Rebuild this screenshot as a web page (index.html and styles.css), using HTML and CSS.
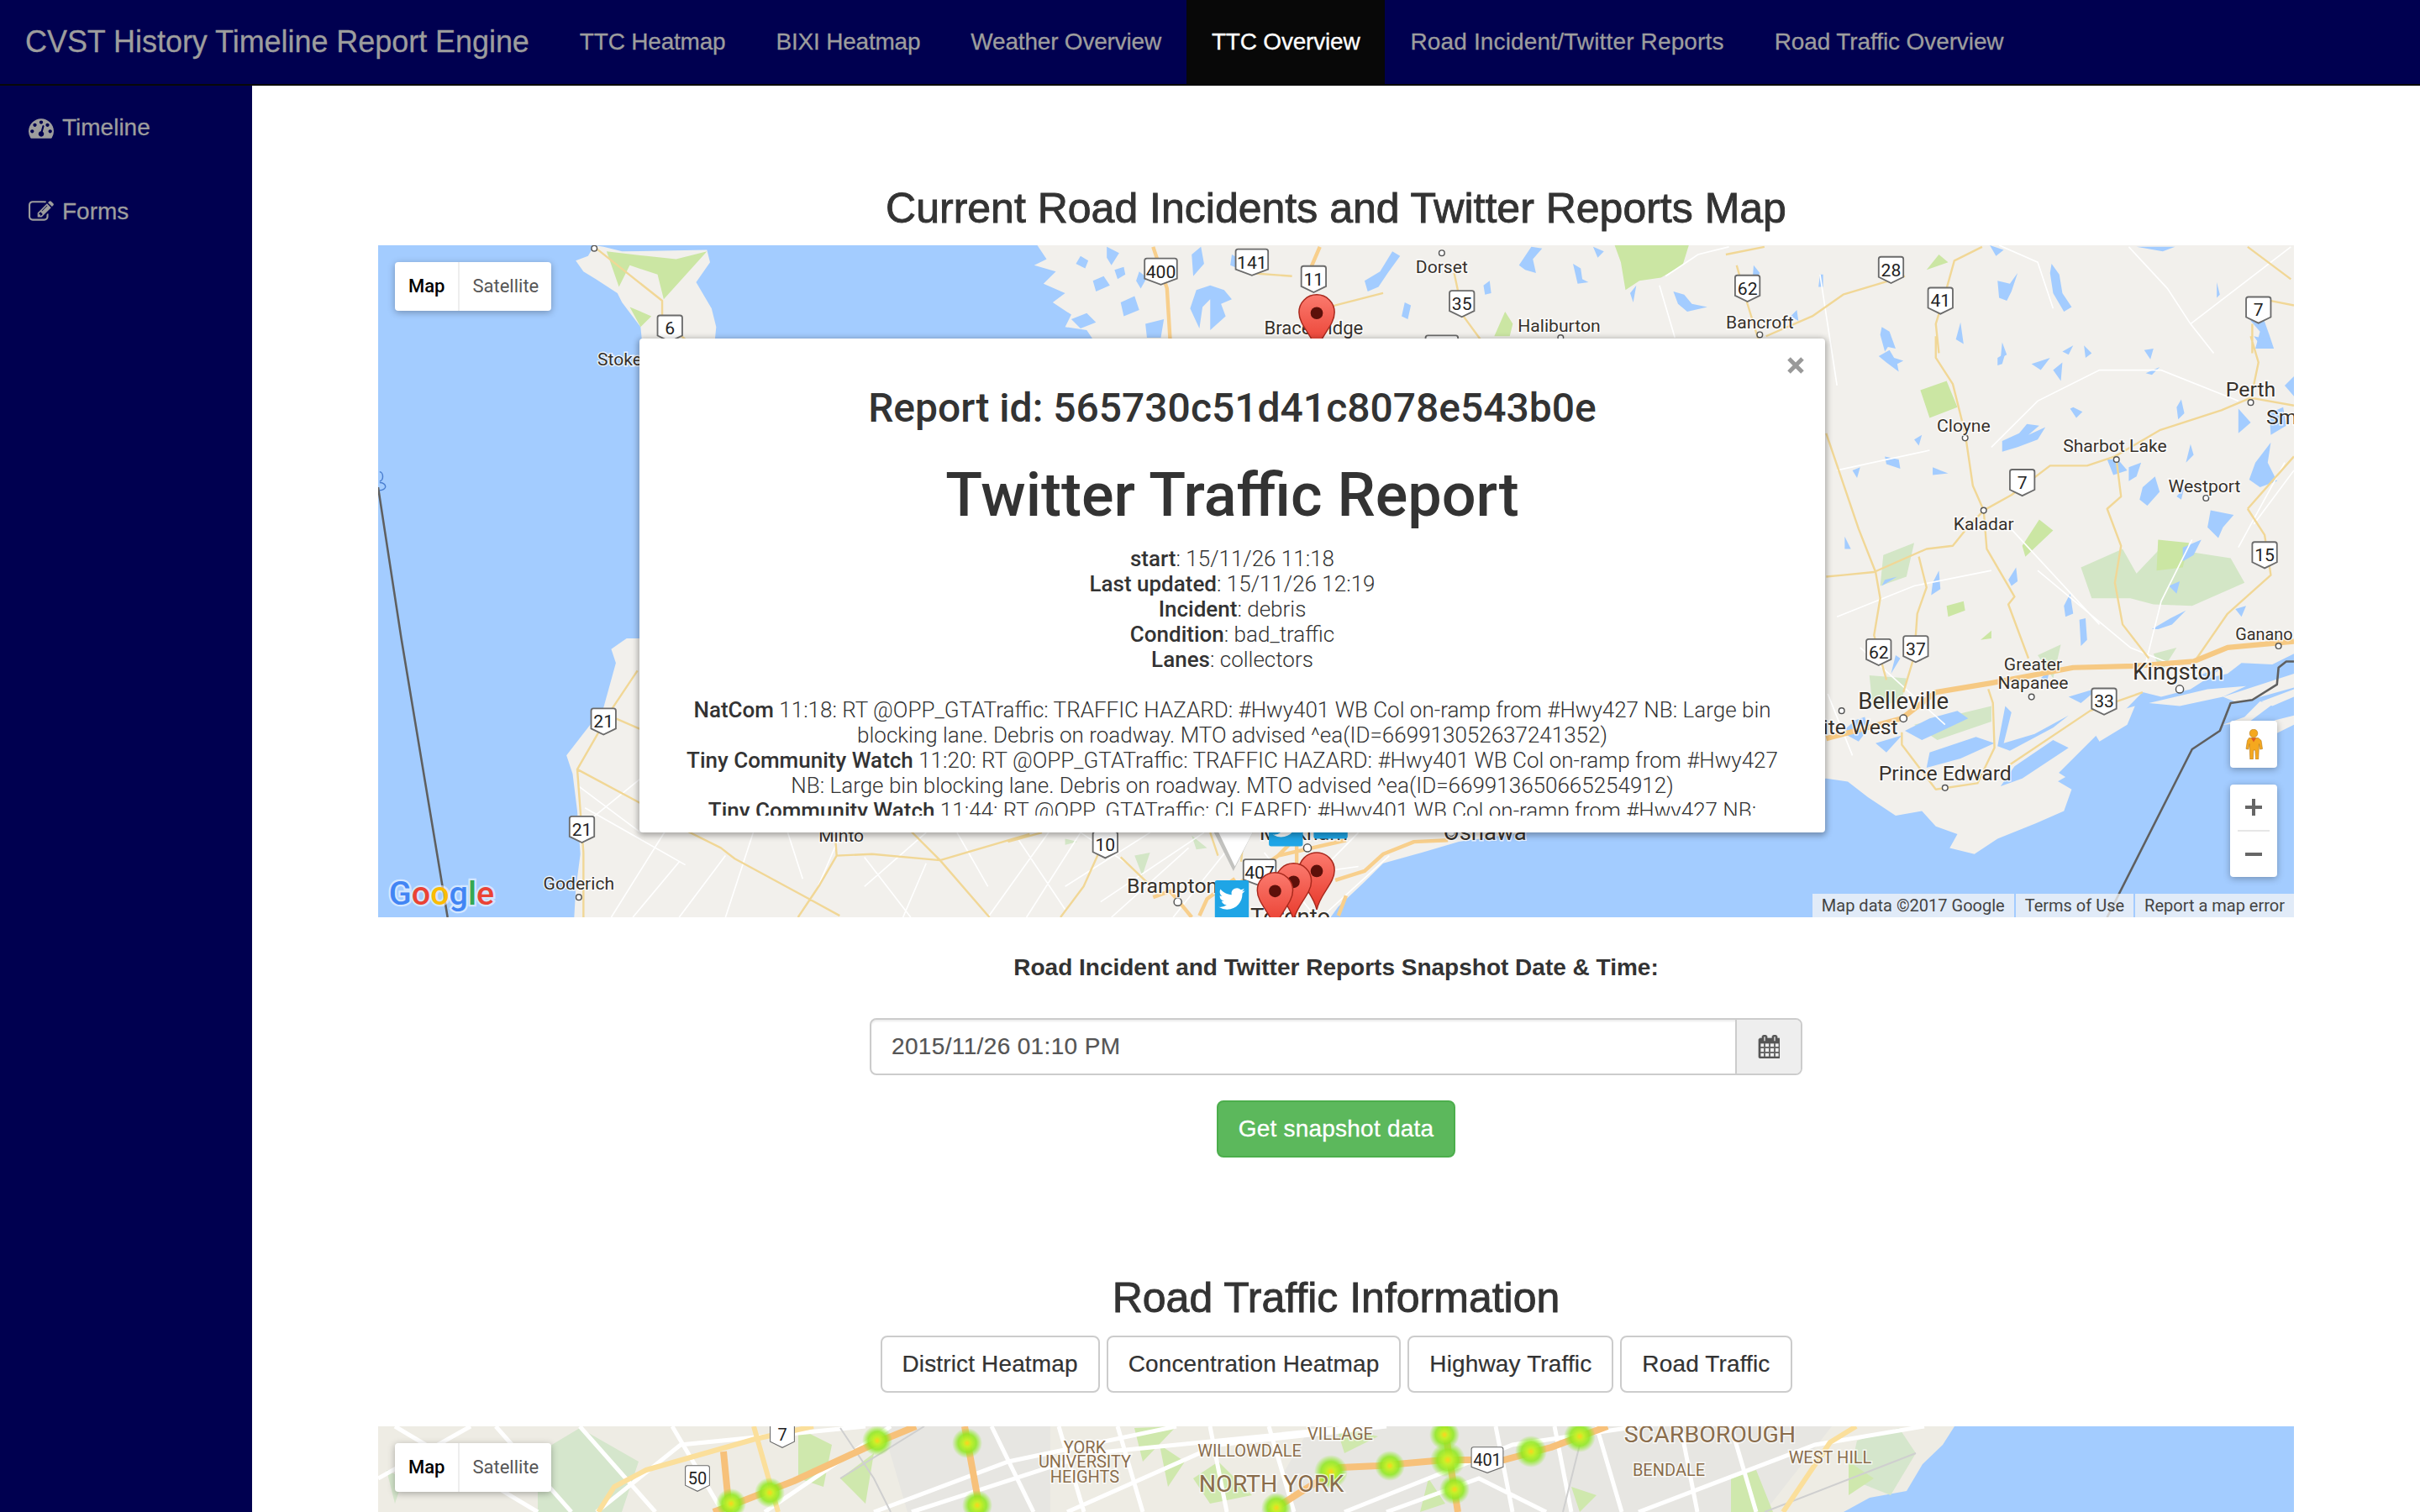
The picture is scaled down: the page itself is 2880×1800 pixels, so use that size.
FILE: index.html
```html
<!DOCTYPE html>
<html>
<head>
<meta charset="utf-8">
<title>CVST History Timeline Report Engine</title>
<link rel="stylesheet" href="styles.css">
</head>
<body>

<header class="navbar">
  <a class="brand">CVST History Timeline Report Engine</a>
  <ul class="nav">
    <li><a>TTC Heatmap</a></li>
    <li><a>BIXI Heatmap</a></li>
    <li><a>Weather Overview</a></li>
    <li class="active"><a>TTC Overview</a></li>
    <li class="loose"><a>Road Incident/Twitter Reports</a></li>
    <li class="plain"><a>Road Traffic Overview</a></li>
  </ul>
</header>

<div class="page">
  <aside class="sidebar">
    <a class="side-link">
      <svg class="side-icon" viewBox="0 0 1792 1792"><path d="M384 1152q0-53-37.5-90.5t-90.5-37.5-90.5 37.5-37.5 90.5 37.5 90.5 90.5 37.5 90.5-37.5 37.5-90.5zm192-448q0-53-37.5-90.5t-90.5-37.5-90.5 37.5-37.5 90.5 37.5 90.5 90.5 37.5 90.5-37.5 37.5-90.5zm428 481l101-382q6-26-7.5-48.5t-38.5-29.5-48 6.5-30 39.5l-101 382q-60 5-107 43.5t-63 98.5q-20 77 20 146t117 89 146-20 89-117q16-60-6-117t-72-91zm660-33q0-53-37.5-90.5t-90.5-37.5-90.5 37.5-37.5 90.5 37.5 90.5 90.5 37.5 90.5-37.5 37.5-90.5zm-640-640q0-53-37.5-90.5t-90.5-37.5-90.5 37.5-37.5 90.5 37.5 90.5 90.5 37.5 90.5-37.5 37.5-90.5zm448 192q0-53-37.5-90.5t-90.5-37.5-90.5 37.5-37.5 90.5 37.5 90.5 90.5 37.5 90.5-37.5 37.5-90.5zm320 448q0 261-141 483-19 29-54 29h-1402q-35 0-54-29-141-221-141-483 0-182 71-348t191-286 286-191 348-71 348 71 286 191 191 286 71 348z"/></svg>
      Timeline
    </a>
    <a class="side-link">
      <svg class="side-icon" viewBox="0 0 1792 1792"><path d="M888 1184l116-116-152-152-116 116v56h96v96h56zm440-720q-16-16-33 1l-350 350q-17 17-1 33t33-1l350-350q17-17 1-33zm80 594v190q0 119-84.5 203.5t-203.5 84.5h-832q-119 0-203.5-84.5t-84.5-203.5v-832q0-119 84.5-203.5t203.5-84.5h832q63 0 117 25 15 7 18 23 3 17-9 29l-49 49q-14 14-32 8-23-6-45-6h-832q-66 0-113 47t-47 113v832q0 66 47 113t113 47h832q66 0 113-47t47-113v-126q0-13 9-22l64-64q15-15 35-7t20 29zm-96-738l288 288-672 672h-288v-288zm444 132l-92 92-288-288 92-92q28-28 68-28t68 28l152 152q28 28 28 68t-28 68z"/></svg>
      Forms
    </a>
  </aside>

  <main class="content">
    <h2 class="title title-first">Current Road Incidents and Twitter Reports Map</h2>

    <div class="map">
      <svg class="map-canvas" viewBox="245 159 1241 436" preserveAspectRatio="none">
        <defs>
          <path id="sh" d="M-6.5-8.5h13a1.5 1.5 0 0 1 1.5 1.5V4.6L0 8.5-8 4.6V-7a1.5 1.5 0 0 1 1.5-1.5z"/>
          <path id="shw" d="M-9-8.5H9a1.5 1.5 0 0 1 1.5 1.5V4.6L0 8.5-10.500 4.600V-7A1.500 1.500 0 0 1-9-8.500z"/>
          <linearGradient id="pinfill" x1="0" y1="0" x2="0" y2="1">
            <stop offset="0" stop-color="#fb7a6e"/>
            <stop offset="1" stop-color="#e8392b"/>
          </linearGradient>
          <g id="pin">
            <path class="pin-body" d="M0 37C-2 27-11.500 20-11.500 11.500A11.500 11.500 0 1 1 11.500 11.500C11.500 20 2 27 0 37z"/>
            <circle class="pin-dot" cx="0" cy="12" r="4"/>
          </g>
          <g id="bird">
            <rect class="tw-box" width="22" height="25" rx="1.500"/>
            <path class="tw-bird" transform="translate(2.500 3.500) scale(.71)" d="M23.953 4.57a10 10 0 01-2.825.775 4.958 4.958 0 002.163-2.723c-.951.555-2.005.959-3.127 1.184a4.92 4.92 0 00-8.384 4.482C7.69 8.095 4.067 6.13 1.64 3.162a4.822 4.822 0 00-.666 2.475c0 1.71.87 3.213 2.188 4.096a4.904 4.904 0 01-2.228-.616v.06a4.923 4.923 0 003.946 4.827 4.996 4.996 0 01-2.212.085 4.936 4.936 0 004.604 3.417 9.867 9.867 0 01-6.102 2.105c-.39 0-.779-.023-1.17-.067a13.995 13.995 0 007.557 2.209c9.053 0 13.998-7.496 13.998-13.985 0-.21 0-.42-.015-.63A9.935 9.935 0 0024 4.59z"/>
          </g>
        </defs>

        <rect class="land" x="245" y="159" width="1241" height="436"/>

        <!-- Georgian Bay and Lake Huron -->
        <path class="water" d="M245 159H672L678 168 670 172 684 176 676 184 690 190 682 196 694 204 690 212 704 214 712 226H415V414H406L396 421 399 430 391 459 377 477 367 490 371 502 374 526 376 554 373 577 372 595H245z"/>
        <!-- Lake Ontario and the St Lawrence -->
        <path class="water" d="M862 595 867 588 884 572 896 560 921 553 945 546 1000 538 1040 520 1183 505 1197 507 1210 517 1228 529 1245 526 1254 536 1268 541 1263 550 1279 554 1294 544 1319 534 1337 526 1342 512 1330 505 1345 490 1363 472 1376 461 1388 449 1400 452 1419 447 1430 440 1443 437 1452 430 1472 431 1486 424V595z"/>
        <!-- Bruce peninsula -->
        <path class="land" d="M385 159 391 160 403 163 458 162 460 170 451 183 461 200 464 212 463 222H416L415 212 403 196 400 190 386 181 378 176 373 169 381 166z"/>
        <path class="park" d="M393 163 419 166 438 168 458 163 430 194 426 178 408 172 401 186zM408 199 422 205 415 212z"/>
        <!-- islands, Wolfe and around -->
        <path class="land" d="M1354 471 1372 461 1383 458 1378 470 1360 481zM1392 456 1430 447 1455 445 1440 452 1412 458zM1300 510 1330 499 1338 504 1310 520zM1440 470l14-5 10-10 8 2-16 12zM1460 475l14-8 12-3v6l-20 10zM1465 455l21-8v5l-14 6zM1440 452 1486 437V446L1450 456z"/>
        <path class="land" d="M694 168l6-4 2 8-5 3zM684 164l5 1-2 6zM700 182l5 2-5 5zM697 198l8-3 1 6z"/>

        <path class="park" d="M1046 159H1094L1090 172 1076 180 1062 182 1053 188 1050 170zM1244 253 1261 247 1268 264 1250 271zM1310 354 1321 337 1330 344 1312 361zM1261 393 1272 390 1273 396 1262 400zM1283 415 1290 409 1290 414zM1256 165 1248 175 1262 170zM975 202 980 210 978 218 968 218z"/>
        <path class="forest" d="M1348 368 1375 356 1384 372 1400 355 1445 362 1454 378 1420 393 1395 392 1380 388 1355 388z"/>
        <path class="park" d="M1398 350 1418 352 1414 368 1397 370z"/>
        <path class="forest" d="M1220 360 1240 352 1235 374 1218 380zM1211 438 1235 440 1232 455 1213 458zM1240 470 1290 458 1290 468 1255 480zM690 544 698 546 690 548zM772 542 782 550 775 551zM735 555 745 553 740 568zM1320 425 1335 418 1330 440zM1395 424 1410 420 1400 436z"/>

        <g class="lakes">
          <path d="M700 166l5 3-2 5-6-3zM717 160l8 4-5 8-3-5zM708 182l7-3 4 6-9 4zM726 196l9-4 3 9-10 4zM694 207l10-4 6 6-10 4zM722 175l6-2 1 5-5 3zM738 176l5 4-4 7-3-5zM772 165l6-5 2 11-7 8zM775 188l9-3 2 7-7 7-2 14-6-13zM784 185l9 3 5 6-7 3 3 8-10 9zM742 210l12-3-2 12h-9zM798 165l7 4-3 5-5-2zM884 182l10-6 8-13 5 3-8 11-6 9-7 3zM910 196l4 2-2 9-4-2zM961 185l4-3 1 8-4 1zM984 172l8-12 7 1-6 7 2 9-7-2zM1019 171l5 3 1 7 4 2-7 1zM1032 160l7 3-4 4zM1056 190l4-5-2 11zM1084 189l7 2 5 6 10 2-13 3-6-5zM1136 172l4 5-5 8zM1179 178l2 0 0 8-3 0zM1294 182l8 2 5-7-4 12-3 6-5-2zM1329 171l5 7 2 12 6 9-5 3-7-12-2-13zM1289 159l9 3-5 4zM1384 160l25 0-8 3zM1219 212l5 3 4 11-5-1-2 3-3-11zM1389 227l6-1-2 7zM1436 183l2 8-2 2zM1459 198l6 5 5 14 3 9h-12l3-11-6-7zM1160 205l4-4 1 7zM1270 209l2 14-5-3z"/>
          <path d="M1217 231l7-4 3 5 6 2-4 2 1 5-8-6zM1294 232l5-3-2 7-3 1zM1336 228l7-4-3 6zM1390 242l9-4-5 5zM1343 264l6 3-4 4-4-6zM1413 259l2 9-4 4-1-8zM1297 286l11-5 5-6 8 1-7 6 11-5-5 8-13 5-10 3zM1221 296l9 2 1 6-9-3zM1252 303l5 2 5 2-10 1zM1419 288l2 7-5 5zM1461 300l10-13-2 13 6 12-11 4-7-5zM1365 298l7 0 6 7-9 3zM1379 303l8-3-3 9-5 3zM1388 316l8-7 3 10-8 9-5-4zM1410 322l5-6-2 8zM1432 331l15 3-7 8-3 7-7-7zM1301 376l5-8 1 9-4 3zM1337 393l4-8 2 13-5 2zM1347 402l4-1 1 14-4 4zM1252 378l4-8 1 12-6 4zM1221 376l8-2-10 6zM1414 355l12-5-5 10-7 4zM1394 408l12-7 10-5-9 9-9 3zM1405 380l7-3-2 8zM1448 395l7-2-3 7zM1450 265l8 9-8 7zM1470 268l9-4 2 12-10 6zM1480 250l6-6v13zM1460 218l9 2-4 5zM1240 285l5-3-2 7zM1195 348l4 8-4 0zM1200 305l5-2-2 7z"/>
          <path d="M1193 475l9-8 6-2 2 8-6 8zM1420 440l20-8-10 9zM1228 425l3 2-6 10zM1322 440l6-6-2 8z"/>
          <path d="M1297 222l3 8-4 2zM1316 236l12-4-6 8zM1330 240l6-5-1 12zM1350 224l5 5-4 3z"/>
          <!-- Bay of Quinte -->
          <path d="M1234 474 1250 466 1268 461 1275 466 1258 474 1245 480zM1299 458 1303 462 1298 482 1318 476 1340 464 1330 472 1302 487 1294 484zM1250 488 1280 478 1292 482 1270 492 1248 498zM1305 497 1330 480 1340 485 1310 505 1296 510zM1215 482 1232 477 1222 488zM1340 452 1360 446 1348 456z"/>
        </g>

        <!-- minor roads -->
        <path class="road-min" d="M379 524 444 561M431 539 396 595M440 559 410 595M470 555 440 595M488 540 470 595M510 539 520 570M545 540 530 575M560 556 590 595M600 560 585 595M620 540 640 575M660 545 690 590M560 575 600 540M680 539 640 595M700 540 665 595M730 560 700 540M690 575 745 540M713 585 780 540M720 595 770 550M760 595 800 545M375 510 415 540M372 540 415 505M819 553 850 592M826 595 880 540M856 595 900 555M810 572 880 562M1179 178 1190 250M1079 179 1100 165 1120 160M1075 185 1085 219M1379 160 1404 187 1419 210 1434 229M1484 160 1419 210M1295 159 1320 170 1330 200M1190 305 1250 292M1190 400 1240 380 1290 370M1205 420 1260 470M1320 370 1380 420M1380 420 1430 440M1420 350 1400 390 1390 430M1300 340 1360 405M1450 355 1480 300M1486 305 1460 340M1184 450 1200 490M1450 260 1400 240 1360 240 1320 260 1290 290"/>

        <!-- main roads -->
        <path class="road" d="M413 435 397 459 374 499 378 553 378 595M374 499 415 521M399 466 415 473M445 539 467 550 476 557 524 583 544 594M541 541 542 555 531 574 517 595M542 555 565 554 609 558 590 539M609 558 641 595M667 541 609 558M687 595 702 575 711 555 709 540M726 556 750 579M784 540 789 555M806 540 804 559M653 546 675 540M385 160 429 195 429 207 445 221M809 177 837 179M861 199 896 190M942 177 948 205 959 220M1118 165 1143 160M1125 172 1132 197 1139 220M1234 179 1194 191 1174 205 1144 218M1284 160 1266 169 1261 187 1254 210 1256 229M1456 160 1484 181M1459 210 1459 229M1471 195 1486 198M1254 218V232L1265 249 1273 281 1278 315 1285 331 1303 321 1328 302 1352 302 1370 296 1399 279 1439 266 1458 258 1486 263M1458 218 1463 235 1458 259M1285 331 1287 356 1305 387 1301 392 1314 427M1183 281 1204 343 1215 371 1218 388 1214 412 1222 441M1183 374 1194 373 1214 371 1248 356 1265 354 1273 344 1285 331M1243 361 1248 381 1242 398 1241 412 1239 429 1233 449M1371 298 1374 322 1365 330 1374 354 1370 378 1375 405 1392 427M1456 330 1486 296M1456 330 1467 347 1471 373 1443 398 1423 427M1232 475V483L1254 512 1281 508 1292 485 1291 456 1288 447M1302 496 1354 461 1388 449"/>
        <path class="road-main" d="M747 160 756 187 758 220M855 160 849 174M828 555 872 545M804 572 828 555 840 543M840 543V565M938 545 916 546 896 554 884 565 865 571M872 581 867 594M747 582 758 578 768 590 772 595M777 594 782 583 800 570"/>
        <path class="road-hwy" d="M1183 479 1232 466 1254 449 1290 443 1343 433 1383 432 1421 429 1443 420 1486 416"/>

        <!-- border -->
        <path class="border-line" d="M245 316 260 414 290 595M1365 595 1420 486 1438 474 1445 456 1459 454 1475 444 1476 433 1481 429H1486"/>
        <path class="lake-outline" d="M246 306a2 3 0 0 1 0 6M246 313a3 2 0 0 1 0 5"/>

        <!-- towns -->
        <g class="town">
          <circle cx="385" cy="161" r="1.800"/><circle cx="934" cy="164" r="1.800"/><circle cx="1011" cy="219" r="1.800"/>
          <circle cx="1140" cy="217" r="1.800"/><circle cx="1285" cy="331" r="1.800"/><circle cx="1273" cy="284" r="1.800"/>
          <circle cx="1371" cy="298" r="1.800"/><circle cx="1429" cy="323" r="1.800"/><circle cx="1458" cy="261" r="1.800"/>
          <circle cx="1476" cy="419" r="1.800"/><circle cx="1412" cy="447" r="2.500"/><circle cx="1316" cy="452" r="1.800"/>
          <circle cx="1233" cy="466" r="2.300"/><circle cx="1193" cy="461" r="1.800"/><circle cx="1260" cy="511" r="1.800"/>
          <circle cx="375" cy="582" r="1.800"/><circle cx="847" cy="550" r="2.500"/><circle cx="763" cy="585" r="2.500"/><circle cx="940" cy="540" r="2.500"/>
        </g>

        <!-- labels -->
        <g class="label">
          <text x="387" y="237">Stoke</text>
          <text x="819" y="217" class="wide">Bracebridge</text>
          <text class="mid" x="934" y="177">Dorset</text>
          <text class="mid" x="1010" y="215">Haliburton</text>
          <text class="mid" x="1140" y="213">Bancroft</text>
          <text class="mid big" x="1458" y="257">Perth</text>
          <text class="big" x="1468" y="275">Sm</text>
          <text class="mid" x="1272" y="280">Cloyne</text>
          <text class="mid" x="1370" y="293">Sharbot Lake</text>
          <text class="mid" x="1428" y="319">Westport</text>
          <text class="mid" x="1285" y="344">Kaladar</text>
          <text class="small" x="1448" y="415">Ganano</text>
          <text class="mid" x="1317" y="435">Greater</text>
          <text class="mid" x="1317" y="447">Napanee</text>
          <text class="mid large" x="1411" y="441">Kingston</text>
          <text class="mid large" x="1233" y="460">Belleville</text>
          <text class="big" x="1181" y="476">ite West</text>
          <text class="mid big" x="1260" y="506">Prince Edward</text>
          <text class="mid" x="545" y="546">Minto</text>
          <text class="mid" x="375" y="577">Goderich</text>
          <text class="big" x="730" y="579">Brampton</text>
          <text class="large" x="935" y="545">Oshawa</text>
          <text class="big" x="816" y="545">Markham</text>
          <text class="large" x="810" y="600">Toronto</text>
        </g>

        <!-- highway shields -->
        <g class="shield">
          <g transform="translate(752 176)"><use href="#shw"/><text>400</text></g>
          <g transform="translate(811 170)"><use href="#shw"/><text>141</text></g>
          <g transform="translate(851 181)"><use href="#sh"/><text>11</text></g>
          <g transform="translate(947 197)"><use href="#sh"/><text>35</text></g>
          <g transform="translate(1132 187)"><use href="#sh"/><text>62</text></g>
          <g transform="translate(1225 175)"><use href="#sh"/><text>28</text></g>
          <g transform="translate(1257 195)"><use href="#sh"/><text>41</text></g>
          <g transform="translate(1463 201)"><use href="#sh"/><text>7</text></g>
          <g transform="translate(434 213)"><use href="#sh"/><text>6</text></g>
          <g transform="translate(934 226)"><use href="#shw"/><text>118</text></g>
          <g transform="translate(1310 313)"><use href="#sh"/><text>7</text></g>
          <g transform="translate(1217 423)"><use href="#sh"/><text>62</text></g>
          <g transform="translate(1241 421)"><use href="#sh"/><text>37</text></g>
          <g transform="translate(1467 360)"><use href="#sh"/><text>15</text></g>
          <g transform="translate(1363 455)"><use href="#sh"/><text>33</text></g>
          <g transform="translate(391 468)"><use href="#sh"/><text>21</text></g>
          <g transform="translate(377 538)"><use href="#sh"/><text>21</text></g>
          <g transform="translate(716 548)"><use href="#sh"/><text>10</text></g>
          <g transform="translate(816 566)"><use href="#shw"/><text>407</text></g>
        </g>

        <!-- markers -->
        <use href="#bird" x="822" y="524"/>
        <use href="#bird" x="851" y="519"/>
        <use href="#bird" x="787" y="571"/>
        <use href="#pin" x="853" y="191"/>
        <use href="#pin" x="853" y="553"/>
        <use href="#pin" x="838" y="560"/>
        <use href="#pin" x="826" y="566"/>

        <!-- info window tail -->
        <path class="tail-shade" d="M786 539H812L799 565z"/>
        <path class="tail" d="M789 539H812L800 562z"/>

        <text class="logo" x="252" y="587"><tspan class="g-blue">G</tspan><tspan class="g-red">o</tspan><tspan class="g-yellow">o</tspan><tspan class="g-blue">g</tspan><tspan class="g-green">l</tspan><tspan class="g-red">e</tspan></text>
      </svg>

      <div class="map-type">
        <span class="map-type-btn on">Map</span>
        <span class="map-type-btn">Satellite</span>
      </div>

      <div class="info-window">
        <svg class="info-close" viewBox="0 0 20 20"><path d="M2 2 18 18M18 2 2 18"/></svg>
        <div class="info-body">
          <h3>Report id: 565730c51d41c8078e543b0e</h3>
          <h1>Twitter Traffic Report</h1>
          <p class="info-facts">
            <b>start</b>: 15/11/26 11:18<br>
            <b>Last updated</b>: 15/11/26 12:19<br>
            <b>Incident</b>: debris<br>
            <b>Condition</b>: bad_traffic<br>
            <b>Lanes</b>: collectors
          </p>
          <p class="info-tweets">
            <b>NatCom</b> 11:18: RT @OPP_GTATraffic: TRAFFIC HAZARD: #Hwy401 WB Col on-ramp from #Hwy427 NB: Large bin blocking lane. Debris on roadway. MTO advised ^ea(ID=669913052637241352)<br>
            <b>Tiny Community Watch</b> 11:20: RT @OPP_GTATraffic: TRAFFIC HAZARD: #Hwy401 WB Col on-ramp from #Hwy427 NB: Large bin blocking lane. Debris on roadway. MTO advised ^ea(ID=669913650665254912)<br>
            <b>Tiny Community Watch</b> 11:44: RT @OPP_GTATraffic: CLEARED: #Hwy401 WB Col on-ramp from #Hwy427 NB: Large bin blocking lane.
          </p>
        </div>
      </div>

      <div class="street-view">
        <svg class="pegman" viewBox="0 0 22 36">
          <circle class="peg" cx="11" cy="5" r="4.800"/>
          <path class="peg" d="M5.500 10.500h11l3.500 3 1.500 10-2.800.6-1.200-6.500-.8 18.400h-3.200l-.6-11h-2l-.6 11H6.800L6 17.600l-1.200 6.500-2.800-.6 1.500-10z"/>
          <path class="peg-tie" d="M8 10.500h6l-3 5z"/>
        </svg>
      </div>
      <div class="zoom-ctl">
        <svg class="zoom-ico" viewBox="0 0 20 20"><path d="M0 8h8V0h4v8h8v4h-8v8H8v-8H0z"/></svg>
        <i class="zoom-sep"></i>
        <svg class="zoom-ico" viewBox="0 0 20 20"><path d="M0 8h20v4H0z"/></svg>
      </div>

      <div class="map-attrib">
        <span class="attrib-item">Map data ©2017 Google</span>
        <span class="attrib-item">Terms of Use</span>
        <span class="attrib-item">Report a map error</span>
      </div>
    </div>

    <label class="snap-label">Road Incident and Twitter Reports Snapshot Date &amp; Time:</label>
    <div class="date-group">
      <span class="date-input">2015/11/26 01:10 PM</span>
      <span class="date-addon">
        <svg class="cal" viewBox="0 0 1664 1792"><path d="M192 1664h288v-288h-288v288zm352 0h320v-288h-320v288zm-352-352h288v-320h-288v320zm352 0h320v-320h-320v320zm-352-384h288v-288h-288v288zm736 736h320v-288h-320v288zm-384-736h320v-288h-320v288zm768 736h288v-288h-288v288zm-384-352h320v-320h-320v320zm-352-864v-288q0-13-9.500-22.500t-22.500-9.500h-64q-13 0-22.500 9.500t-9.500 22.500v288q0 13 9.500 22.500t22.500 9.500h64q13 0 22.500-9.500t9.500-22.500zm736 864h288v-320h-288v320zm-384-384h320v-288h-320v288zm384 0h288v-288h-288v288zm32-480v-288q0-13-9.500-22.500t-22.500-9.500h-64q-13 0-22.500 9.500t-9.500 22.500v288q0 13 9.500 22.500t22.500 9.500h64q13 0 22.500-9.500t9.500-22.500zm384-64v1280q0 52-38 90t-90 38h-1408q-52 0-90-38t-38-90v-1280q0-52 38-90t90-38h128v-96q0-66 47-113t113-47h64q66 0 113 47t47 113v96h384v-96q0-66 47-113t113-47h64q66 0 113 47t47 113v96h128q52 0 90 38t38 90z"/></svg>
      </span>
    </div>
    <button class="btn btn-success">Get snapshot data</button>

    <h2 class="title title-second">Road Traffic Information</h2>
    <div class="btn-row">
      <button class="btn btn-default">District Heatmap</button>
      <button class="btn btn-default">Concentration Heatmap</button>
      <button class="btn btn-default">Highway Traffic</button>
      <button class="btn btn-default">Road Traffic</button>
    </div>

    <div class="map map-traffic">
      <svg class="map-canvas" viewBox="450 1698 2280 800" preserveAspectRatio="none">
        <defs>
          <radialGradient id="heat">
            <stop offset="0" stop-color="#ffd21e"/>
            <stop offset=".25" stop-color="#c4f02a"/>
            <stop offset=".6" stop-color="#8ee81c" stop-opacity=".85"/>
            <stop offset="1" stop-color="#84e81c" stop-opacity="0"/>
          </radialGradient>
        </defs>
        <rect class="land2" x="450" y="1698" width="2280" height="800"/>
        <path class="block" d="M1050 1698H1250V1800H1080zM1560 1698H1800V1800H1500zM1800 1698H2180L2100 1800H1800z"/>
        <path class="water" d="M2326 1698 2312 1720 2288 1743 2269 1775 2225 1783 2194 1800V2498H2730V1698z"/>
        <path class="forest2" d="M640 1730 690 1700 760 1740 740 1800H640zM460 1750 480 1760 470 1790zM2210 1715 2260 1700 2280 1730 2250 1780 2200 1760z"/>
        <path class="park2" d="M950 1700 990 1720 980 1770 950 1760zM1000 1760 1040 1730 1030 1790zM1350 1700 1400 1698 1360 1740zM1420 1760 1450 1740 1490 1780 1440 1790zM1590 1698 1640 1710 1600 1730zM2060 1760 2090 1750 2110 1800H2060zM2200 1740 2230 1760 2200 1780zM1380 1720l30 20-20 30zM1700 1760l20 30-30 10zM1870 1770l30 10-20 20z"/>
        <path class="road2" d="M450 1760 560 1698M470 1698 640 1800M590 1698 680 1800M690 1698 780 1800M710 1800 810 1720 1030 1698M800 1698 860 1800M910 1800 1060 1698M1040 1800 1200 1740 1400 1698M1085 1800 1300 1730 1620 1698M1180 1698 1230 1800M1260 1698 1290 1800M1330 1698 1360 1800M1440 1698 1460 1800M1510 1698 1540 1800M1270 1800 1450 1720 1650 1698M1600 1800 1800 1720 1950 1698M1780 1698 1800 1800M1850 1698 1870 1800M1900 1698 1930 1800M2000 1698 2020 1800M2060 1698 2090 1800M1950 1800 2160 1720 2290 1698M1650 1800 1760 1760 1840 1800"/>
        <path class="rail2" d="M1000 1700 1040 1760 1060 1800M1100 1698 1000 1760M2100 1800 2280 1730M1880 1720 1860 1800"/>
        <path class="road-lite" d="M968 1698 899 1713 769 1750 731 1770 712 1800M897 1698 926 1800M2209 1698 2178 1717 2122 1800"/>
        <path class="road-orange" d="M1090 1698 1044 1717 945 1763 868 1793 849 1800M1148 1698 1163 1780 1167 1800M861 1728 868 1800M1719 1698 1735 1800M1913 1698 1846 1723 1790 1738 1719 1738 1640 1745 1595 1747 1542 1780 1511 1800"/>

        <g class="heat">
          <circle cx="1044" cy="1715" r="18"/><circle cx="1151" cy="1718" r="18"/><circle cx="916" cy="1777" r="18"/>
          <circle cx="870" cy="1790" r="18"/><circle cx="1163" cy="1792" r="18"/><circle cx="1584" cy="1752" r="20"/>
          <circle cx="1519" cy="1795" r="18"/><circle cx="1719" cy="1708" r="18"/><circle cx="1723" cy="1738" r="21"/>
          <circle cx="1731" cy="1773" r="18"/><circle cx="1654" cy="1745" r="18"/><circle cx="1822" cy="1728" r="19"/>
          <circle cx="1880" cy="1710" r="19"/>
        </g>

        <g class="label-brown">
          <text x="1291" y="1730">YORK</text>
          <text x="1291" y="1747">UNIVERSITY</text>
          <text x="1291" y="1765">HEIGHTS</text>
          <text x="1487" y="1734">WILLOWDALE</text>
          <text x="1595" y="1714">VILLAGE</text>
          <text class="huge" x="1513" y="1776">NORTH YORK</text>
          <text class="huge" x="2035" y="1717">SCARBOROUGH</text>
          <text x="2178" y="1742">WEST HILL</text>
          <text x="1986" y="1757">BENDALE</text>
        </g>

        <g class="shield shield-page">
          <g transform="translate(931 1708)"><use href="#sh"/><text>7</text></g>
          <g transform="translate(830 1760)"><use href="#sh"/><text>50</text></g>
          <g transform="translate(1770 1738)"><use href="#shw"/><text>401</text></g>
        </g>
      </svg>
      <div class="map-type">
        <span class="map-type-btn on">Map</span>
        <span class="map-type-btn">Satellite</span>
      </div>
    </div>
  </main>
</div>

</body>
</html>
```

FILE: styles.css
```css
html, body {
  margin: 0;
  height: 100%;
  overflow: hidden;
}

body {
  display: flex;
  flex-direction: column;
  font-family: "Liberation Sans", Arial, sans-serif;
  font-size: 28px;
  line-height: 40px;
  color: #333;
  background: #fff;
}

/* top bar */
.navbar {
  display: flex;
  flex: none;
  height: 100px;
  background: #000050;
  border-bottom: 2px solid #080808;
}

.brand {
  padding: 0 30px;
  font-size: 36px;
  letter-spacing: -.05px;
  line-height: 100px;
  color: #9d9d9d;
  -webkit-text-stroke: .3px #9d9d9d;
}

.nav {
  display: flex;
  margin: 0;
  padding: 0;
  list-style: none;
}

.nav a {
  display: block;
  padding: 0 30px;
  letter-spacing: -.2px;
  line-height: 100px;
  color: #9d9d9d;
  -webkit-text-stroke: .3px #9d9d9d;
}

.nav .loose a {
  letter-spacing: .15px;
}

.nav .plain a {
  letter-spacing: -.1px;
}

.nav .active {
  background: #080808;
}

.nav .active a {
  color: #fff;
  -webkit-text-stroke: .3px #fff;
}

.page {
  display: flex;
  flex: 1;
  min-height: 0;
}

/* left menu */
.sidebar {
  flex: none;
  width: 300px;
  background: #000050;
}

.side-link {
  display: flex;
  align-items: center;
  gap: 10px;
  height: 100px;
  padding-left: 34px;
  color: #9d9d9d;
  -webkit-text-stroke: .3px #9d9d9d;
}

.side-icon {
  width: 30px;
  height: 30px;
  fill: #9d9d9d;
}

/* main column */
.content {
  flex: 1;
  display: flex;
  flex-direction: column;
  align-items: center;
  min-width: 0;
  padding: 118px 150px 0;
}

.title {
  margin: 0;
  font-size: 50px;
  font-weight: 400;
  line-height: 56px;
  -webkit-text-stroke: .9px #333;
}

.title-first {
  margin-bottom: 16px;
}

.title-second {
  margin-top: 139px;
  margin-bottom: 17px;
}

/* maps */
.map {
  position: relative;
  flex: none;
  width: 2280px;
  height: 800px;
  overflow: hidden;
  font-family: Roboto, "Liberation Sans", sans-serif;
}

.map-canvas {
  display: block;
  width: 100%;
  height: 100%;
}

.land { fill: #f2f0ec; }
.water { fill: #a3ccff; }
.park { fill: #cbe6a3; }
.forest { fill: #d3e6c6; }
.lakes { fill: #a3ccff; }
.road-min { fill: none; stroke: #fff; stroke-width: .9; }
.road { fill: none; stroke: #f1d796; stroke-width: 1.3; stroke-linejoin: round; }
.road-main { fill: none; stroke: #f8cf8c; stroke-width: 2.4; stroke-linejoin: round; }
.road-hwy { fill: none; stroke: #f6c983; stroke-width: 3.4; stroke-linejoin: round; }
.border-line { fill: none; stroke: #5f5f5f; stroke-width: 1.4; stroke-linejoin: round; }
.lake-outline { fill: none; stroke: #4a7ed0; stroke-width: .8; }
.town circle { fill: #fff; stroke: #555; stroke-width: .8; }

.label text {
  font-size: 11.5px;
  fill: #36312b;
  stroke: #fff;
  stroke-width: 1.5px;
  stroke-opacity: .8;
  paint-order: stroke;
}

.label .mid { text-anchor: middle; }
.label .big { font-size: 13.5px; }
.label .large { font-size: 15px; }
.label .small { font-size: 10.8px; }
.label .wide { font-size: 12px; }

.shield use { fill: #fff; stroke: #6b6b6b; stroke-width: 1; }
.shield text {
  font-size: 11.5px;
  fill: #222;
  text-anchor: middle;
  transform: translateY(4px);
}

.pin-body { fill: url(#pinfill); stroke: #a8281c; stroke-width: .8; }
.pin-dot { fill: #5d100a; }
.tw-box { fill: #1fa5e6; }
.tw-bird { fill: #fff; }

.tail-shade { fill: #c2c2bf; }
.tail { fill: #fff; }

.logo {
  font-size: 21.5px;
  font-weight: 500;
  stroke: #fff;
  stroke-width: 2.5px;
  stroke-opacity: .55;
  paint-order: stroke;
}

.g-blue { fill: #4285f4; }
.g-red { fill: #ea4335; }
.g-yellow { fill: #fbbc05; }
.g-green { fill: #34a853; }

.map-type {
  position: absolute;
  top: 20px;
  left: 20px;
  display: flex;
  height: 58px;
  background: #fff;
  border-radius: 4px;
  box-shadow: 0 2px 8px rgba(0, 0, 0, .3);
  font-size: 22px;
  line-height: 58px;
  color: #565656;
}

.map-type-btn {
  padding: 0 15px;
}

.map-type-btn.on {
  padding: 0 16px;
  font-weight: 500;
  color: #000;
  border-right: 2px solid #eee;
}

/* popup on the map */
.info-window {
  position: absolute;
  top: 111px;
  left: 311px;
  width: 1411px;
  height: 588px;
  background: #fff;
  border-radius: 4px;
  box-shadow: 0 2px 7px 2px rgba(0, 0, 0, .3);
  font-size: 26px;
  font-weight: 300;
  line-height: 30px;
  color: #333;
  text-align: center;
}

.info-close {
  position: absolute;
  top: 22px;
  right: 25px;
  width: 20px;
  height: 20px;
  fill: none;
  stroke: #999;
  stroke-width: 5;
}

.info-body {
  height: 511px;
  margin: 0 50px;
  padding-top: 57px;
  overflow: hidden;
}

.info-body h3 {
  margin: 0 0 38px;
  font-size: 48px;
  font-weight: 500;
  line-height: 52px;
}

.info-body h1 {
  margin: 0 0 20px;
  font-size: 72px;
  font-weight: 500;
  line-height: 80px;
}

.info-body p {
  margin: 0 0 30px;
}

.info-body b {
  font-weight: 500;
}

.street-view,
.zoom-ctl {
  position: absolute;
  right: 20px;
  display: flex;
  flex-direction: column;
  align-items: center;
  justify-content: center;
  width: 56px;
  background: #fff;
  border-radius: 4px;
  box-shadow: 0 2px 8px rgba(0, 0, 0, .3);
}

.street-view {
  top: 566px;
  height: 56px;
}

.pegman {
  width: 22px;
  height: 36px;
}

.peg { fill: #f5a81e; stroke: #b5791a; stroke-width: .6; }
.peg-tie { fill: #e05a20; }

.zoom-ctl {
  top: 642px;
  height: 110px;
  gap: 17px;
}

.zoom-ico {
  width: 20px;
  height: 20px;
  fill: #666;
}

.zoom-sep {
  display: block;
  width: 38px;
  height: 2px;
  background: #e6e6e6;
}

.map-attrib {
  position: absolute;
  right: 0;
  bottom: 0;
  display: flex;
  gap: 2px;
  font-size: 20px;
  line-height: 28px;
  color: #444;
}

.attrib-item {
  padding: 0 11px;
  background: rgba(245, 245, 245, .75);
}

/* snapshot form */
.snap-label {
  margin-top: 40px;
  font-weight: 700;
}

.date-group {
  display: flex;
  flex: none;
  width: 1110px;
  height: 68px;
  margin-top: 40px;
  border: 2px solid #ccc;
  border-radius: 8px;
  box-sizing: border-box;
  box-shadow: inset 0 2px 2px rgba(0, 0, 0, .075);
}

.date-input {
  flex: 1;
  padding-left: 24px;
  letter-spacing: .35px;
  line-height: 64px;
  color: #555;
  -webkit-text-stroke: .2px #555;
}

.date-addon {
  display: flex;
  align-items: center;
  justify-content: center;
  width: 76px;
  background: #eee;
  border-left: 2px solid #ccc;
  border-radius: 0 6px 6px 0;
}

.cal {
  width: 26px;
  height: 28px;
  fill: #555;
  stroke: #555;
  stroke-width: 45;
}

.btn {
  flex: none;
  height: 68px;
  padding: 0 24px;
  border: 2px solid transparent;
  border-radius: 8px;
  box-sizing: border-box;
  font-family: inherit;
  font-size: 28px;
  letter-spacing: .14px;
  line-height: 40px;
}

.btn-success {
  margin-top: 30px;
  background: #5cb85c;
  border-color: #4cae4c;
  color: #fff;
  letter-spacing: .22px;
  -webkit-text-stroke: .3px #fff;
}

.btn-default {
  background: #fff;
  border-color: #ccc;
  color: #333;
  -webkit-text-stroke: .2px #333;
}

.btn-row {
  display: flex;
  gap: 8px;
  height: 68px;
}

.map-traffic {
  margin-top: 40px;
}

/* lower map */
.land2 { fill: #eeece4; }
.block { fill: #e7e6e2; }
.forest2 { fill: #d5e6cc; }
.park2 { fill: #cfe8ad; }
.road2 { fill: none; stroke: #fff; stroke-width: 5; }
.rail2 { fill: none; stroke: #cfcfcf; stroke-width: 2; }
.road-lite { fill: none; stroke: #fbdf9b; stroke-width: 6; stroke-linejoin: round; }
.road-orange { fill: none; stroke: #f7c17a; stroke-width: 8; stroke-linejoin: round; }
.heat circle { fill: url(#heat); }

.label-brown text {
  font-size: 20px;
  fill: #8a6d4c;
  stroke: #fff;
  stroke-width: 3px;
  stroke-opacity: .7;
  paint-order: stroke;
  text-anchor: middle;
}

.label-brown .huge { font-size: 28.5px; }

.shield-page use { stroke-width: .6; transform: scale(1.8); }
.shield-page text { font-size: 20px; transform: translateY(7px); }
```
